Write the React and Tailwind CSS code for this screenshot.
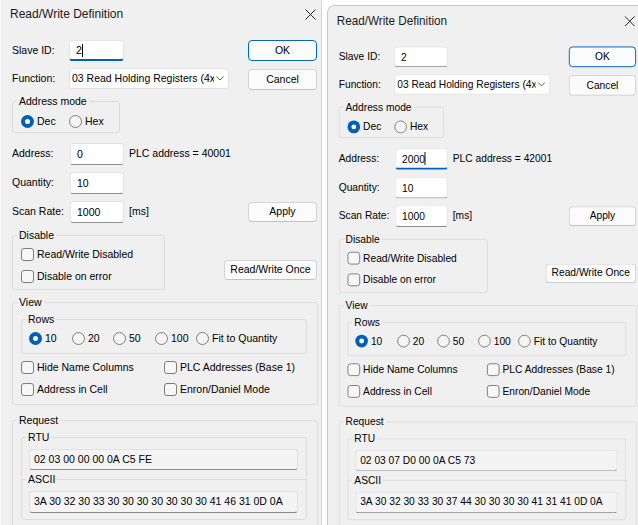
import React from 'react';

const FONT = "font-['Liberation_Sans',Arial,sans-serif]";

const dialogs = {
    left: {
        slave: '2',
        slaveFocused: true,
        address: '0',
        addressFocused: false,
        plc: '40001',
        rtu: '02 03 00 00 00 0A C5 FE',
        ascii: '3A 30 32 30 33 30 30 30 30 30 30 30 41 46 31 0D 0A',
    },
    right: {
        slave: '2',
        slaveFocused: false,
        address: '2000',
        addressFocused: true,
        plc: '42001',
        rtu: '02 03 07 D0 00 0A C5 73',
        ascii: '3A 30 32 30 33 30 37 44 30 30 30 30 41 31 41 0D 0A',
    },
};

function TextBox({ value, focused, className = '' }) {
    return (
        <div
            className={`h-full bg-white rounded-[3px] border border-[#e4e4e4] pl-[6px] flex items-center ${
                focused ? 'border-b-2 border-b-[#005fb8]' : 'border-b-[#8d8d8d]'
            } ${className}`}
        >
            <span className="leading-[14px]">{value}</span>
            {focused && <span className="w-px h-[13px] bg-black" />}
        </div>
    );
}

function Button({ children, primary, className = '' }) {
    return (
        <div
            className={`flex items-center justify-center rounded-[4px] border bg-[#fbfbfb] ${
                primary ? 'border-[#0067c0]' : 'border-[#d3d3d3] border-b-[#c2c2c2]'
            } ${className}`}
        >
            {children}
        </div>
    );
}

function Radio({ label, checked, className = '' }) {
    return (
        <div className={`flex items-center h-[14px] ${className}`}>
            {checked ? (
                <span className="w-[13px] h-[13px] rounded-full bg-[#005fb8] flex items-center justify-center shrink-0">
                    <span className="w-[5px] h-[5px] rounded-full bg-white" />
                </span>
            ) : (
                <span className="w-[13px] h-[13px] rounded-full border border-[#7e7e7e] bg-[#f5f5f5] shrink-0" />
            )}
            <span className="ml-[3px] leading-[14px]">{label}</span>
        </div>
    );
}

function Check({ label }) {
    return (
        <div className="flex items-center h-[14px]">
            <span className="w-[13px] h-[13px] rounded-[3px] border border-[#7e7e7e] bg-[#f7f7f7] shrink-0" />
            <span className="ml-[3px] leading-[14px]">{label}</span>
        </div>
    );
}

function Legend({ children }) {
    return <legend className="ml-[4px] px-[2px] leading-[14px]">{children}</legend>;
}

function ReadOnly({ children, className = '' }) {
    return (
        <div
            className={`w-[269px] bg-[#f4f4f4] rounded-[3px] border border-[#e0e0e0] border-b-[#8a8a8a] pl-[4px] flex items-center ${className}`}
        >
            {children}
        </div>
    );
}

function Dialog({ slave, slaveFocused, address, addressFocused, plc, rtu, ascii, framed }) {
    return (
        <div
            className={`shrink-0 w-[322px] h-[540px] bg-[#f0f0f0] border-l border-r ${
                framed
                    ? 'border-t border-[#c9c9c9] rounded-tl-[8px] pt-[1px]'
                    : 'border-l-[#f8f8f8] border-r-[#d6d6d6]'
            }`}
        >
            {/* title bar */}
            <div className="h-[28px] flex items-center justify-between pl-[9px] pr-[5px]">
                <span className="text-[12px] text-[#1a1a1a]">Read/Write Definition</span>
                <svg width="11" height="11" viewBox="0 0 11 11">
                    <path d="M0.5 0.5L10.5 10.5M10.5 0.5L0.5 10.5" stroke="#222" strokeWidth="1" />
                </svg>
            </div>

            <div className="ml-[11px] w-[306px]">
                <div className="mt-[12px] h-[21px] flex items-center">
                    <span className="w-[57px]">Slave ID:</span>
                    <TextBox className="w-[55px]" value={slave} focused={slaveFocused} />
                    <Button primary className="ml-auto mr-[1px] w-[69px] h-[21px]">OK</Button>
                </div>

                <div className="mt-[7px] h-[21px] flex items-center">
                    <span className="w-[57px]">Function:</span>
                    <div className="w-[160px] h-full bg-white border border-[#e2e2e2] rounded-[3px] flex items-center pl-[2px] pr-[4px]">
                        <span className="w-[142px] overflow-hidden whitespace-nowrap">03 Read Holding Registers (4x)</span>
                        <svg className="ml-auto" width="8" height="5" viewBox="0 0 8 5">
                            <path d="M0.5 0.5L4 4L7.5 0.5" fill="none" stroke="#5a5a5a" strokeWidth="1" />
                        </svg>
                    </div>
                    <Button className="ml-auto mr-[1px] w-[69px] h-[21px] mt-[2px]">Cancel</Button>
                </div>

                <fieldset className="mt-[5px] w-[108px] h-[39px] border border-[#dcdcdc] rounded-[3px]">
                    <Legend>Address mode</Legend>
                    <div className="flex pl-[8px] pt-[6px]">
                        <Radio checked label="Dec" className="w-[48px]" />
                        <Radio label="Hex" />
                    </div>
                </fieldset>

                <div className="mt-[10px] h-[22px] flex items-center">
                    <span className="w-[58px]">Address:</span>
                    <TextBox className="w-[54px]" value={address} focused={addressFocused} />
                    <span className="ml-[5px]">PLC address = {plc}</span>
                </div>

                <div className="mt-[7px] h-[22px] flex items-center">
                    <span className="w-[58px]">Quantity:</span>
                    <TextBox className="w-[54px]" value="10" />
                </div>

                <div className="mt-[7px] h-[22px] flex items-center">
                    <span className="w-[58px]">Scan Rate:</span>
                    <TextBox className="w-[54px]" value="1000" />
                    <span className="ml-[5px]">[ms]</span>
                    <Button className="ml-auto mr-[1px] w-[69px] h-[20px]">Apply</Button>
                </div>

                <div className="mt-[5px] flex items-end">
                    <fieldset className="w-[153px] h-[62px] border border-[#dcdcdc] rounded-[3px]">
                        <Legend>Disable</Legend>
                        <div className="pl-[8px] pt-[5px] flex flex-col gap-[8px]">
                            <Check label="Read/Write Disabled" />
                            <Check label="Disable on error" />
                        </div>
                    </fieldset>
                    <Button className="ml-auto mr-[1px] mb-[10px] w-[93px] h-[20px]">Read/Write Once</Button>
                </div>

                <fieldset className="mt-[5px] w-[306px] h-[110px] border border-[#dcdcdc] rounded-[3px]">
                    <Legend>View</Legend>
                    <div className="pl-[8px] pt-[3px]">
                        <fieldset className="w-[286px] h-[42px] border border-[#dcdcdc] rounded-[3px]">
                            <Legend>Rows</Legend>
                            <div className="flex pl-[7px] pt-[5px]">
                                <Radio checked label="10" className="w-[43px]" />
                                <Radio label="20" className="w-[41px]" />
                                <Radio label="50" className="w-[42px]" />
                                <Radio label="100" className="w-[41px]" />
                                <Radio label="Fit to Quantity" />
                            </div>
                        </fieldset>
                        <div className="mt-[6px] grid grid-cols-[143px_1fr] gap-y-[8px]">
                            <Check label="Hide Name Columns" />
                            <Check label="PLC Addresses (Base 1)" />
                            <Check label="Address in Cell" />
                            <Check label="Enron/Daniel Mode" />
                        </div>
                    </div>
                </fieldset>

                <fieldset className="mt-[8px] w-[306px] h-[130px] border border-[#dcdcdc] rounded-[3px]">
                    <Legend>Request</Legend>
                    <div className="pl-[8px] pt-[3px]">
                        <fieldset className="w-[286px] border border-b-0 border-[#dcdcdc] rounded-t-[3px]">
                            <Legend>RTU</Legend>
                            <div className="pl-[7px] pt-[5px] pb-[9px]">
                                <ReadOnly className="h-[21px]">{rtu}</ReadOnly>
                            </div>
                        </fieldset>
                        <fieldset className="-mt-[7px] w-[286px] border border-[#dcdcdc] rounded-b-[3px]">
                            <Legend>ASCII</Legend>
                            <div className="pl-[7px] pt-[5px] pb-[6px]">
                                <ReadOnly className="h-[22px]">{ascii}</ReadOnly>
                            </div>
                        </fieldset>
                    </div>
                </fieldset>
            </div>
        </div>
    );
}

export default function App() {
    return (
        <div className={`w-[638px] h-[525px] overflow-hidden bg-white flex items-start text-[10.5px] text-black ${FONT}`}>
            <Dialog {...dialogs.left} />
            <div className="ml-[5px] mt-[5px] shrink-0 origin-top-left scale-x-[0.975] scale-y-[0.987]">
                <Dialog {...dialogs.right} framed />
            </div>
        </div>
    );
}
